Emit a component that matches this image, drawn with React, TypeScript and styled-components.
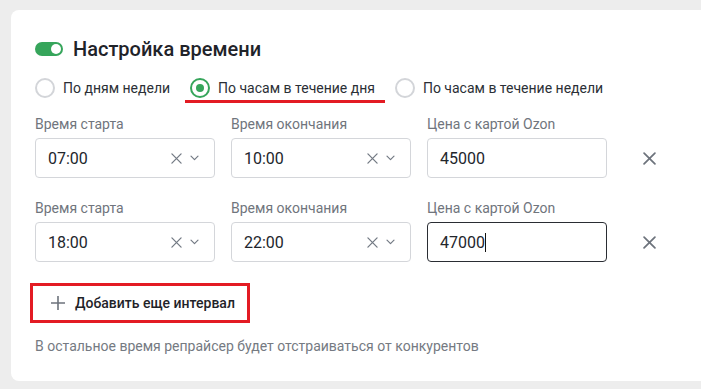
import React from 'react';
import styled, { createGlobalStyle } from 'styled-components';

const GlobalStyle = createGlobalStyle`
  html, body {
    margin: 0;
    padding: 0;
    background: #ededed;
    font-family: Roboto, "Noto Sans", Arial, sans-serif;
    overflow: hidden;
  }
`;

const Page = styled.div`
  padding: 10px 0 0 11px;
  width: 701px;
  height: 389px;
  box-sizing: border-box;
`;

const Card = styled.section`
  width: 720px;
  height: 371px;
  box-sizing: border-box;
  background: #fff;
  border-radius: 8px;
  padding: 27px 24px 0 24px;
`;

const TitleRow = styled.div`
  display: flex;
  align-items: center;
  gap: 10px;
  height: 24px;
`;

const Toggle = styled.span`
  position: relative;
  width: 28px;
  height: 14px;
  border-radius: 7px;
  background: #36a55b;
  flex: none;

  &::after {
    content: '';
    position: absolute;
    right: 2px;
    top: 2px;
    width: 10px;
    height: 10px;
    border-radius: 50%;
    background: #fff;
  }
`;

const Title = styled.h2`
  margin: 0;
  font-size: 20px;
  line-height: 24px;
  font-weight: 500;
  color: #1f2329;
`;

const RadioRow = styled.div`
  display: flex;
  align-items: center;
  gap: 20px;
  margin-top: 17px;
  height: 20px;
`;

const Option = styled.label<{ $marked?: boolean }>`
  position: relative;
  display: flex;
  align-items: center;
  gap: 8px;
  font-size: 14px;
  line-height: 20px;
  color: #2b2f36;

  ${(p) =>
    p.$marked &&
    `
    &::after {
      content: '';
      position: absolute;
      left: -5px;
      right: -10px;
      top: 22px;
      height: 3px;
      background: #e31b23;
    }
  `}
`;

const RadioDot = styled.span<{ $checked?: boolean }>`
  width: 20px;
  height: 20px;
  box-sizing: border-box;
  border-radius: 50%;
  border: 2px solid ${(p) => (p.$checked ? '#36a55b' : '#d3d5d9')};
  display: flex;
  align-items: center;
  justify-content: center;
  flex: none;

  &::after {
    content: '';
    width: 8px;
    height: 8px;
    border-radius: 50%;
    background: ${(p) => (p.$checked ? '#36a55b' : 'transparent')};
  }
`;

const Rows = styled.div`
  display: flex;
  flex-direction: column;
  gap: 20px;
  margin-top: 16px;
`;

const IntervalRow = styled.div`
  display: grid;
  grid-template-columns: 180px 180px 180px 24px;
  column-gap: 16px;
  align-items: end;
`;

const Field = styled.div`
  display: flex;
  flex-direction: column;
  gap: 4px;
`;

const Label = styled.span`
  font-size: 14px;
  line-height: 20px;
  color: #70757d;
`;

const Box = styled.div<{ $focused?: boolean }>`
  height: 40px;
  box-sizing: border-box;
  border: 1px solid ${(p) => (p.$focused ? '#2a2d33' : '#d4d6da')};
  border-radius: 4px;
  display: flex;
  align-items: center;
  padding: 0 15px 0 12px;
  font-size: 16px;
  color: #22262c;
`;

const Value = styled.span`
  flex: 1;
`;

const Caret = styled.span`
  display: inline-block;
  width: 1px;
  height: 19px;
  background: #111;
  vertical-align: -4px;
`;

const Icons = styled.span`
  display: flex;
  align-items: center;
  gap: 8px;
  color: #737a84;
`;

const RemoveButton = styled.button`
  border: 0;
  background: none;
  padding: 0;
  margin-left: 14px;
  width: 24px;
  height: 40px;
  display: flex;
  align-items: center;
  justify-content: center;
  color: #6d737c;
`;

const AddButton = styled.button`
  margin: 21px 0 0 -5px;
  height: 40px;
  box-sizing: border-box;
  border: 3px solid #e31b23;
  background: #fff;
  display: flex;
  align-items: center;
  gap: 10px;
  padding: 0 12px 0 18px;
  font-family: inherit;
  font-size: 14px;
  font-weight: 500;
  color: #1f2329;
`;

const Note = styled.p`
  margin: 14px 0 0;
  font-size: 14px;
  line-height: 18px;
  color: #757a82;
`;

const Cross = ({ size = 11, w = 1.4 }: { size?: number; w?: number }) => (
  <svg width={size} height={size} viewBox="0 0 12 12" fill="none" stroke="currentColor" strokeWidth={w} strokeLinecap="round">
    <path d="M1 1l10 10M11 1L1 11" />
  </svg>
);

const Chevron = () => (
  <svg width="9" height="6" viewBox="0 0 9 6" fill="none" stroke="currentColor" strokeWidth="1.2" strokeLinecap="round" strokeLinejoin="round">
    <path d="M1 1.2l3.5 3.5L8 1.2" />
  </svg>
);

const Plus = () => (
  <svg width="14" height="14" viewBox="0 0 14 14" fill="none" stroke="#6d737c" strokeWidth="1.6">
    <path d="M7 0v14M0 7h14" />
  </svg>
);

const intervals = [
  { start: '07:00', end: '10:00', price: '45000', focused: false },
  { start: '18:00', end: '22:00', price: '47000', focused: true },
];

const TimeSelect = ({ value }: { value: string }) => (
  <Box>
    <Value>{value}</Value>
    <Icons>
      <Cross />
      <Chevron />
    </Icons>
  </Box>
);

export default function App() {
  return (
    <Page>
      <GlobalStyle />
      <Card>
        <TitleRow>
          <Toggle />
          <Title>Настройка времени</Title>
        </TitleRow>
        <RadioRow>
          <Option>
            <RadioDot />
            По дням недели
          </Option>
          <Option $marked>
            <RadioDot $checked />
            По часам в течение дня
          </Option>
          <Option>
            <RadioDot />
            По часам в течение недели
          </Option>
        </RadioRow>
        <Rows>
          {intervals.map((row) => (
            <IntervalRow key={row.start}>
              <Field>
                <Label>Время старта</Label>
                <TimeSelect value={row.start} />
              </Field>
              <Field>
                <Label>Время окончания</Label>
                <TimeSelect value={row.end} />
              </Field>
              <Field>
                <Label>Цена с картой Ozon</Label>
                <Box $focused={row.focused}>
                  <Value>
                    {row.price}
                    {row.focused && <Caret />}
                  </Value>
                </Box>
              </Field>
              <RemoveButton>
                <Cross size={13} w={1.6} />
              </RemoveButton>
            </IntervalRow>
          ))}
        </Rows>
        <AddButton>
          <Plus />
          Добавить еще интервал
        </AddButton>
        <Note>В остальное время репрайсер будет отстраиваться от конкурентов</Note>
      </Card>
    </Page>
  );
}
